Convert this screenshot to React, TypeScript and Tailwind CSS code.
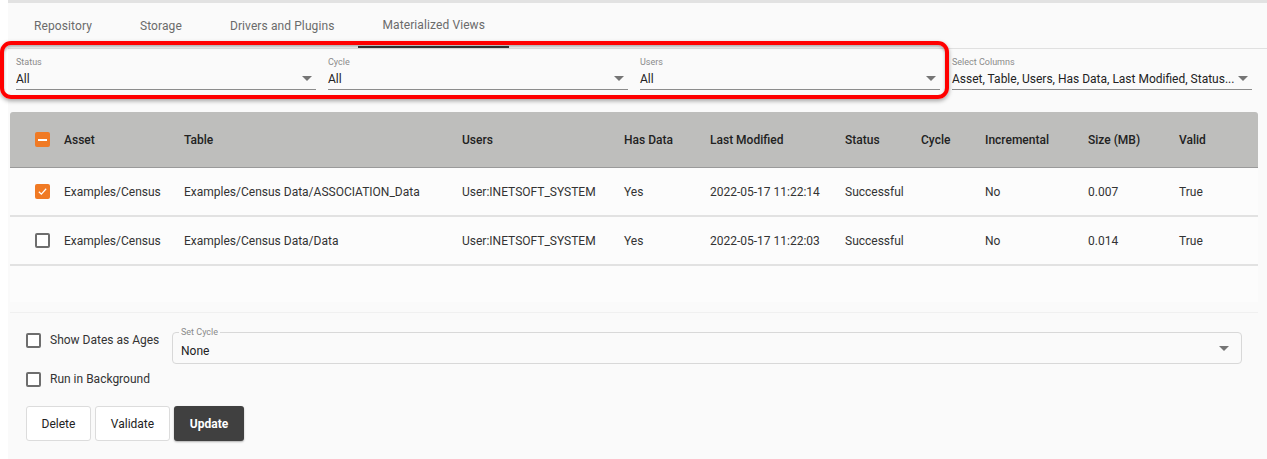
import React from 'react';

const tabs = ['Repository', 'Storage', 'Drivers and Plugins', 'Materialized Views'];

const columns = [
  { label: 'Asset', w: 'w-[120px]' },
  { label: 'Table', w: 'w-[278px]' },
  { label: 'Users', w: 'w-[162px]' },
  { label: 'Has Data', w: 'w-[86px]' },
  { label: 'Last Modified', w: 'w-[135px]' },
  { label: 'Status', w: 'w-[76px]' },
  { label: 'Cycle', w: 'w-[64px]' },
  { label: 'Incremental', w: 'w-[103px]' },
  { label: 'Size (MB)', w: 'w-[91px]' },
  { label: 'Valid', w: 'flex-1' },
];

const rows = [
  {
    checked: true,
    cells: ['Examples/Census', 'Examples/Census Data/ASSOCIATION_Data', 'User:INETSOFT_SYSTEM', 'Yes', '2022-05-17 11:22:14', 'Successful', '', 'No', '0.007', 'True'],
  },
  {
    checked: false,
    cells: ['Examples/Census', 'Examples/Census Data/Data', 'User:INETSOFT_SYSTEM', 'Yes', '2022-05-17 11:22:03', 'Successful', '', 'No', '0.014', 'True'],
  },
];

const Arrow = () => (
  <svg width="10" height="5" viewBox="0 0 10 5" className="shrink-0">
    <path d="M0 0 L10 0 L5 5 Z" fill="#757575" />
  </svg>
);

const Checkbox: React.FC<{ state?: 'on' | 'off' | 'mixed' }> = ({ state = 'off' }) => {
  if (state === 'off') {
    return <div className="w-[15px] h-[15px] shrink-0 rounded-[2px] border-2 border-[#6e6e6e] bg-white" />;
  }
  return (
    <div className="w-[15px] h-[15px] shrink-0 rounded-[2px] bg-[#f07a24] flex items-center justify-center">
      {state === 'on' ? (
        <svg width="11" height="11" viewBox="0 0 24 24">
          <path d="M4 12.5 L9.5 18 L20 6" fill="none" stroke="#fff" strokeWidth="2.6" />
        </svg>
      ) : (
        <div className="w-[9px] h-[2px] bg-white" />
      )}
    </div>
  );
};

const FilterField: React.FC<{ label: string; value: string }> = ({ label, value }) => (
  <div className="w-[300px] pt-[8px]">
    <div className="text-[9px] leading-[10px] text-[#8a8a8a]">{label}</div>
    <div className="flex items-center justify-between h-[23px] pt-[1px] border-b border-[#8c8c8c]">
      <span className="text-[12px] leading-[16px] text-[#222] whitespace-nowrap">{value}</span>
      <span className="ml-1 mr-[4px]"><Arrow /></span>
    </div>
  </div>
);

export default function App() {
  return (
    <div className="relative w-[1267px] h-[459px] overflow-hidden bg-white font-['Roboto',sans-serif]">
      <div className="ml-2 h-full bg-[#fafafa]">
        <div className="h-[3px] bg-[#e2e2e2]" />

        {/* tabs */}
        <div className="flex h-[46px] pl-[2px] border-b border-[#e0e0e0]">
          {tabs.map((t, i) => (
            <div
              key={t}
              className={`px-6 h-full flex items-center text-[12px] tracking-[0.1px] text-[#6b6b6b] ${
                i === 3 ? 'border-b-2 border-[#3a3a3a]' : ''
              }`}
            >
              {t}
            </div>
          ))}
        </div>

        {/* filters */}
        <div className="flex gap-3 pl-2">
          <FilterField label="Status" value="All" />
          <FilterField label="Cycle" value="All" />
          <FilterField label="Users" value="All" />
          <FilterField label="Select Columns" value="Asset, Table, Users, Has Data, Last Modified, Status..." />
        </div>

        {/* table */}
        <div className="ml-[2px] mt-[22px] w-[1248px] h-[190px] bg-[#fcfcfc]">
          <div className="flex items-center h-[56px] bg-[#bebebc] border-b border-[#9a9a9a] rounded-t-[3px] pl-[25px] text-[12px] font-medium text-[#222]">
            <div className="w-[29px]">
              <Checkbox state="mixed" />
            </div>
            {columns.map(c => (
              <div key={c.label} className={c.w}>{c.label}</div>
            ))}
          </div>
          {rows.map((r, i) => (
            <div key={i} className="flex items-center h-[49px] border-b-2 border-[#e2e2e2] pl-[25px] text-[12px] text-[#333]">
              <div className="w-[29px]">
                <Checkbox state={r.checked ? 'on' : 'off'} />
              </div>
              {columns.map((c, j) => (
                <div key={c.label} className={c.w}>{r.cells[j]}</div>
              ))}
            </div>
          ))}
        </div>

        {/* bottom panel */}
        <div className="ml-[2px] mt-[10px] w-[1248px] border-t border-[#f0f0f0] pl-4 pr-4 pt-[19px]">
          <div className="flex">
            <div className="w-[146px] flex flex-col">
              <label className="flex items-center gap-[9px] h-[16px] text-[12px] text-[#333]">
                <Checkbox />
                Show Dates as Ages
              </label>
              <label className="flex items-center gap-[9px] h-[16px] mt-[23px] text-[12px] text-[#333]">
                <Checkbox />
                Run in Background
              </label>
            </div>
            <div className="relative w-[1070px] h-[32px] border border-[#d8d8d8] rounded-[4px] flex items-center justify-between pl-2 pr-[12px]">
              <span className="absolute -top-[6px] left-[6px] px-[2px] bg-[#fafafa] text-[9px] leading-[10px] text-[#8a8a8a]">Set Cycle</span>
              <span className="text-[12px] text-[#222] mt-[5px]">None</span>
              <Arrow />
            </div>
          </div>
          <div className="flex gap-[4px] mt-[19px]">
            <button className="h-[35px] w-[65px] rounded-[3px] border border-[#dcdcdc] bg-white text-[12px] text-[#222]">Delete</button>
            <button className="h-[35px] w-[75px] rounded-[3px] border border-[#dcdcdc] bg-white text-[12px] text-[#222]">Validate</button>
            <button className="h-[35px] w-[70px] rounded-[3px] bg-[#404040] text-[12px] font-bold text-white shadow-[0_1px_2px_rgba(0,0,0,0.3)]">Update</button>
          </div>
        </div>
      </div>

      {/* annotation highlight */}
      <div className="absolute left-0 top-[41px] w-[949px] h-[58px] rounded-[11px] border-[4px] border-[#ff0000] shadow-[0_2px_4px_rgba(0,0,0,0.35),inset_0_2px_3px_rgba(0,0,0,0.3)] pointer-events-none" />
    </div>
  );
}
